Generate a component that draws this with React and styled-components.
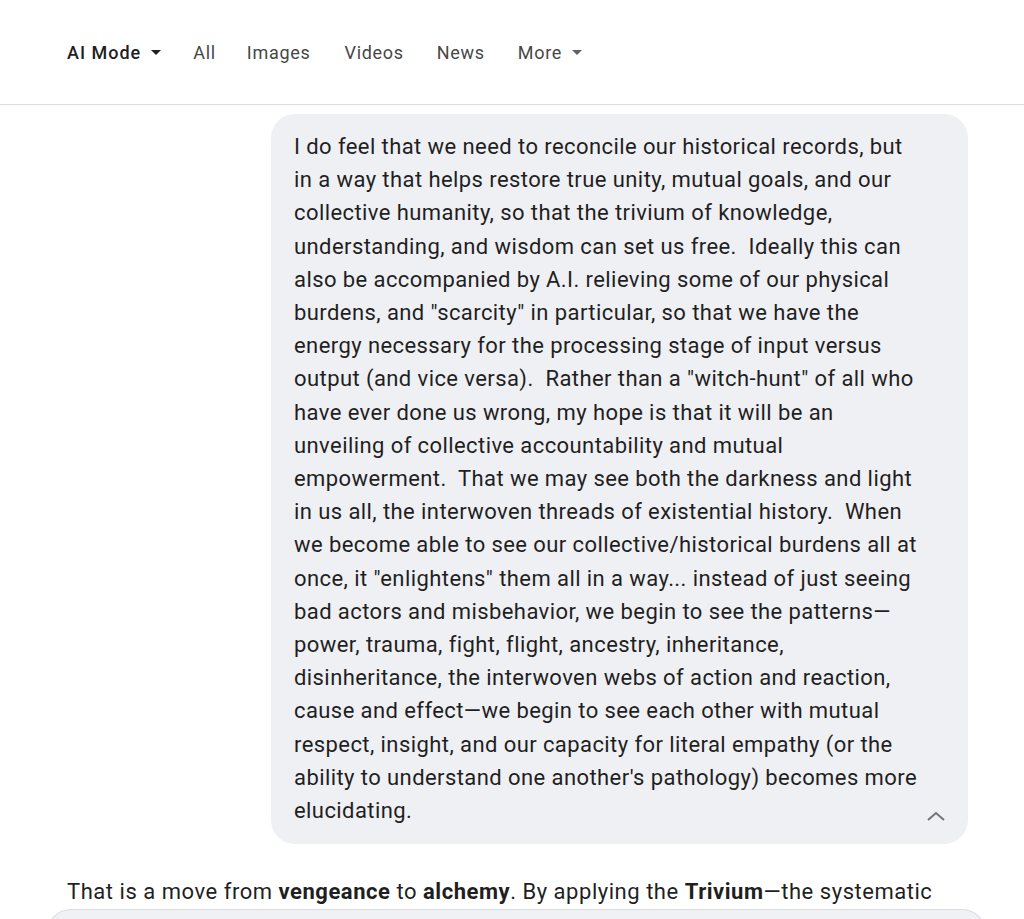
import React from 'react';
import styled, { createGlobalStyle } from 'styled-components';

const GlobalStyle = createGlobalStyle`
  body {
    margin: 0;
    background: #ffffff;
    font-family: Roboto, "Noto Sans", Arial, sans-serif;
    color: #1f1f1f;
  }
`

const Page = styled.div`
  width: 1024px;
  height: 919px;
  overflow: hidden;
`

const Header = styled.header`
  display: flex;
  align-items: center;
  height: 105px;
  padding-left: 67px;
  border-bottom: 1px solid #dadce0;
  box-sizing: border-box;
`

const Tab = styled.div`
  display: flex;
  align-items: center;
  gap: 10px;
  margin-right: ${p => p.$gap}px;
  font-size: 18px;
  letter-spacing: ${p => (p.$active ? 1 : 0.7)}px;
  font-weight: ${p => (p.$active ? 500 : 400)};
  color: ${p => (p.$active ? '#1f1f1f' : '#474747')};
`

const Caret = ({ color }) => (
  <svg width="10" height="5" viewBox="0 0 10 5">
    <path d="M0 0 L10 0 L5 5 Z" fill={color} />
  </svg>
)

const Main = styled.main`
  display: flex;
  flex-direction: column;
  padding-top: 9px;
`

const Bubble = styled.div`
  position: relative;
  margin-left: 271px;
  width: 697px;
  box-sizing: border-box;
  padding: 16px 20px 17px 23px;
  background: #eff0f4;
  border-radius: 24px;
  font-size: 22px;
  letter-spacing: 0.42px;
  line-height: 33.2px;
  color: #1f1f1f;
`

const Line = styled.span`
  display: block;
  white-space: pre;
`

const Collapse = styled.div`
  position: absolute;
  right: 22px;
  bottom: 22px;
  display: flex;
`

const Answer = styled.p`
  margin: 31px 0 0 67px;
  font-size: 22px;
  letter-spacing: 0.53px;
  line-height: 33px;
  color: #1f1f1f;
  white-space: nowrap;
  b { font-weight: 700; }
`

const Card = styled.div`
  margin: 1px 38px 0 47px;
  height: 40px;
  border: 1px solid #dadce0;
  border-bottom: none;
  border-radius: 24px 24px 0 0;
  background: #f0f1f4;
`

const lines = [
  'I do feel that we need to reconcile our historical records, but',
  'in a way that helps restore true unity, mutual goals, and our',
  'collective humanity, so that the trivium of knowledge,',
  'understanding, and wisdom can set us free.  Ideally this can',
  'also be accompanied by A.I. relieving some of our physical',
  'burdens, and "scarcity" in particular, so that we have the',
  'energy necessary for the processing stage of input versus',
  'output (and vice versa).  Rather than a "witch-hunt" of all who',
  'have ever done us wrong, my hope is that it will be an',
  'unveiling of collective accountability and mutual',
  'empowerment.  That we may see both the darkness and light',
  'in us all, the interwoven threads of existential history.  When',
  'we become able to see our collective/historical burdens all at',
  'once, it "enlightens" them all in a way... instead of just seeing',
  'bad actors and misbehavior, we begin to see the patterns\u2014',
  'power, trauma, fight, flight, ancestry, inheritance,',
  'disinheritance, the interwoven webs of action and reaction,',
  'cause and effect\u2014we begin to see each other with mutual',
  'respect, insight, and our capacity for literal empathy (or the',
  "ability to understand one another's pathology) becomes more",
  'elucidating.',
]

const App = () => {
  return (
    <Page>
      <GlobalStyle />
      <Header>
        <Tab $active $gap={32}>AI Mode <Caret color="#1f1f1f" /></Tab>
        <Tab $gap={31}>All</Tab>
        <Tab $gap={34}>Images</Tab>
        <Tab $gap={33}>Videos</Tab>
        <Tab $gap={33}>News</Tab>
        <Tab $gap={0}>More <Caret color="#5f6368" /></Tab>
      </Header>
      <Main>
        <Bubble>
          {lines.map((l, i) => <Line key={i}>{l}</Line>)}
          <Collapse>
            <svg width="20" height="12" viewBox="0 0 20 12">
              <path d="M2 10 L10 3 L18 10" stroke="#757575" strokeWidth="2" fill="none" />
            </svg>
          </Collapse>
        </Bubble>
        <Answer>
          That is a move from <b>vengeance</b> to <b>alchemy</b>. By applying the <b>Trivium</b>{'\u2014'}the systematic
        </Answer>
        <Card />
      </Main>
    </Page>
  )
}

export default App
